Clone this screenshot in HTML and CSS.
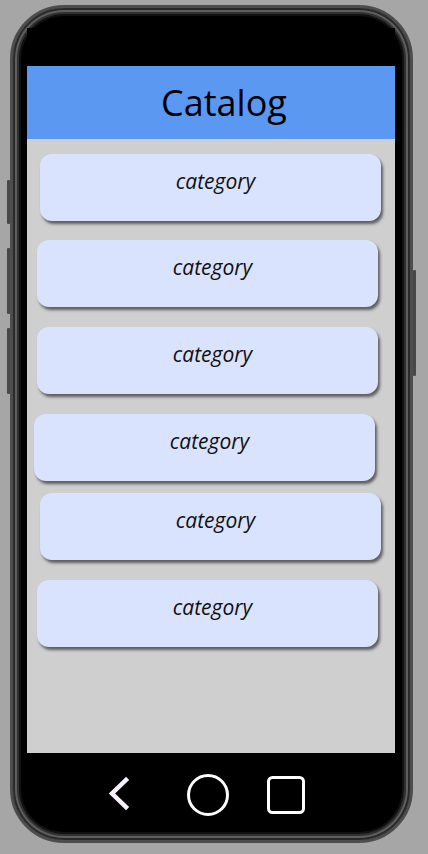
FILE: index.html
```html
<!DOCTYPE html>
<html lang="en">
<head>
<meta charset="utf-8">
<title>Catalog</title>
<link rel="stylesheet" href="styles.css">
</head>
<body>
<div class="phone">
  <span class="btn btn-l1"></span>
  <span class="btn btn-l2"></span>
  <span class="btn btn-l3"></span>
  <span class="btn btn-r1"></span>
  <div class="screen">
    <div class="status"></div>
    <div class="header">Catalog</div>
    <div class="content">
      <div class="card c1">category</div>
      <div class="card c2">category</div>
      <div class="card c3">category</div>
      <div class="card c4">category</div>
      <div class="card c5">category</div>
      <div class="card c6">category</div>
    </div>
  </div>
  <div class="nav">
    <svg class="ic-back" width="42" height="40" viewBox="0 0 42 40"><polyline points="19,5 5,18.5 19,32" fill="none" stroke="#f6f0fa" stroke-width="4.5" stroke-linecap="square" stroke-linejoin="miter"/></svg>
    <svg class="ic-home" width="42" height="42" viewBox="0 0 42 42"><circle cx="21" cy="21" r="19.5" fill="none" stroke="#fff" stroke-width="3"/></svg>
    <svg class="ic-recent" width="38" height="38" viewBox="0 0 38 38"><rect x="1.5" y="1.5" width="35" height="35" rx="4" fill="none" stroke="#fff" stroke-width="3"/></svg>
  </div>
</div>
</body>
</html>
```

FILE: styles.css
```css
html, body {
  margin: 0;
  padding: 0;
}
body {
  background: #a6a6a6;
  width: 428px;
  height: 854px;
  overflow: hidden;
  font-family: "Open Sans", "Noto Sans", sans-serif;
}
.phone {
  position: relative;
  margin: 5px 0 0 10px;
  width: 403px;
  height: 838px;
  box-sizing: border-box;
  border-radius: 54px;
  background: #000;
  border: 3px solid #4d4d4d;
  box-shadow: inset 0 0 0 2px #2a2a2a, inset 0 0 0 4px #5e5e5e, inset 0 0 0 6px #303030, inset 0 0 0 8px #111;
  padding: 20px 15px 0 14px;
  display: flex;
  flex-direction: column;
}
.btn {
  position: absolute;
  width: 3px;
  background: #484848;
  border-radius: 1px;
}
.btn-l1 { left: -6px; top: 172px; height: 44px; }
.btn-l2 { left: -6px; top: 240px; height: 66px; }
.btn-l3 { left: -6px; top: 320px; height: 66px; }
.btn-r1 { right: -6px; top: 262px; height: 106px; }
.screen {
  width: 368px;
  display: flex;
  flex-direction: column;
}
.status {
  height: 38px;
  background: #000;
}
.header {
  height: 73px;
  background: #5b98f1;
  display: flex;
  align-items: center;
  justify-content: center;
  padding-left: 26px;
  font-size: 36px;
  color: #000;
  box-sizing: border-box;
}
.content {
  height: 614px;
  background: #cfcfcf;
  padding-top: 15px;
  box-sizing: border-box;
}
.card {
  width: 341px;
  height: 67px;
  box-sizing: border-box;
  border-radius: 12px;
  background: #dae3fe;
  box-shadow: 2px 3px 3px rgba(0, 0, 0, 0.55);
  text-align: center;
  padding: 13px 0 0 10px;
  font-style: italic;
  font-size: 21px;
  line-height: 28px;
  color: #111;
}
.c1 { margin-left: 13px; }
.c2 { margin-left: 10px; margin-top: 19px; }
.c3 { margin-left: 10px; margin-top: 20px; }
.c4 { margin-left: 7px; margin-top: 20px; }
.c5 { margin-left: 13px; margin-top: 12px; }
.c6 { margin-left: 10px; margin-top: 20px; }
.nav {
  flex: 1;
  display: flex;
  align-items: center;
  padding-left: 80px;
  padding-bottom: 4px;
}
.ic-back { margin-right: 38px; }
.ic-home { margin-right: 38px; }
```
